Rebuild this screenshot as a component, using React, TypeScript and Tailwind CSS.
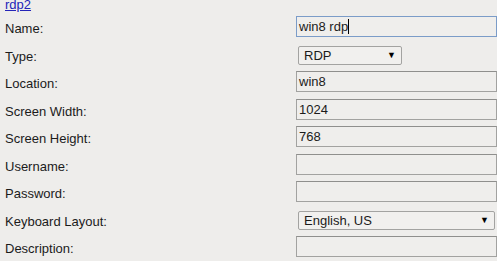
const font = { fontFamily: '"Liberation Sans", Arial, sans-serif' };

type Row =
  | { label: string; kind: 'text'; value?: string; caret?: boolean }
  | { label: string; kind: 'select'; value: string; width: string };

const rows: Row[] = [
  { label: 'Name:', kind: 'text', value: 'win8 rdp', caret: true },
  { label: 'Type:', kind: 'select', value: 'RDP', width: 'w-[104px]' },
  { label: 'Location:', kind: 'text', value: 'win8' },
  { label: 'Screen Width:', kind: 'text', value: '1024' },
  { label: 'Screen Height:', kind: 'text', value: '768' },
  { label: 'Username:', kind: 'text' },
  { label: 'Password:', kind: 'text' },
  { label: 'Keyboard Layout:', kind: 'select', value: 'English, US', width: 'w-[197px]' },
  { label: 'Description:', kind: 'text' },
];

function TextBox({ value, caret }: { value?: string; caret?: boolean }) {
  return (
    <div
      className={
        'h-[21px] w-[240px] border pl-[2px] flex items-center text-[13px] text-[#1b1b1b] bg-[#efeeec] ' +
        (caret ? 'border-[#7b9cc8]' : 'border-[#a2a2a0] border-t-[#8f8f8d]')
      }
    >
      <span className="whitespace-pre leading-[15px]">{value}</span>
      {caret && <span className="w-px h-[15px] bg-black" />}
    </div>
  );
}

function SelectBox({ value, width }: { value: string; width: string }) {
  return (
    <div
      className={
        width +
        ' mt-[2px] ml-[2px] h-[19px] border border-[#a3a3a1] rounded-[2px] bg-[#f1f0ee] flex items-center justify-between pl-[5px] pr-[5px] text-[13px] text-[#1b1b1b]'
      }
    >
      <span className="leading-[15px]">{value}</span>
      <span className="text-[9px] leading-none text-black">▼</span>
    </div>
  );
}

export default function App() {
  return (
    <div className="w-[497px] h-[261px] overflow-hidden bg-[#eeedeb]" style={font}>
      <div className="pl-[5px] -mt-[3px] h-[19px] text-[13px] leading-[15px]">
        <a href="#" className="text-[#2424b8] underline">
          rdp2
        </a>
      </div>
      <div className="flex flex-col">
        {rows.map((r) => (
          <div key={r.label} className="h-[27.5px] flex items-start">
            <div className="w-[296px] pl-[5px] pt-[5px] text-[13px] leading-[15px] text-[#1b1b1b] shrink-0">
              {r.label}
            </div>
            {r.kind === 'text' ? (
              <TextBox value={r.value} caret={r.caret} />
            ) : (
              <SelectBox value={r.value} width={r.width} />
            )}
          </div>
        ))}
      </div>
    </div>
  );
}
